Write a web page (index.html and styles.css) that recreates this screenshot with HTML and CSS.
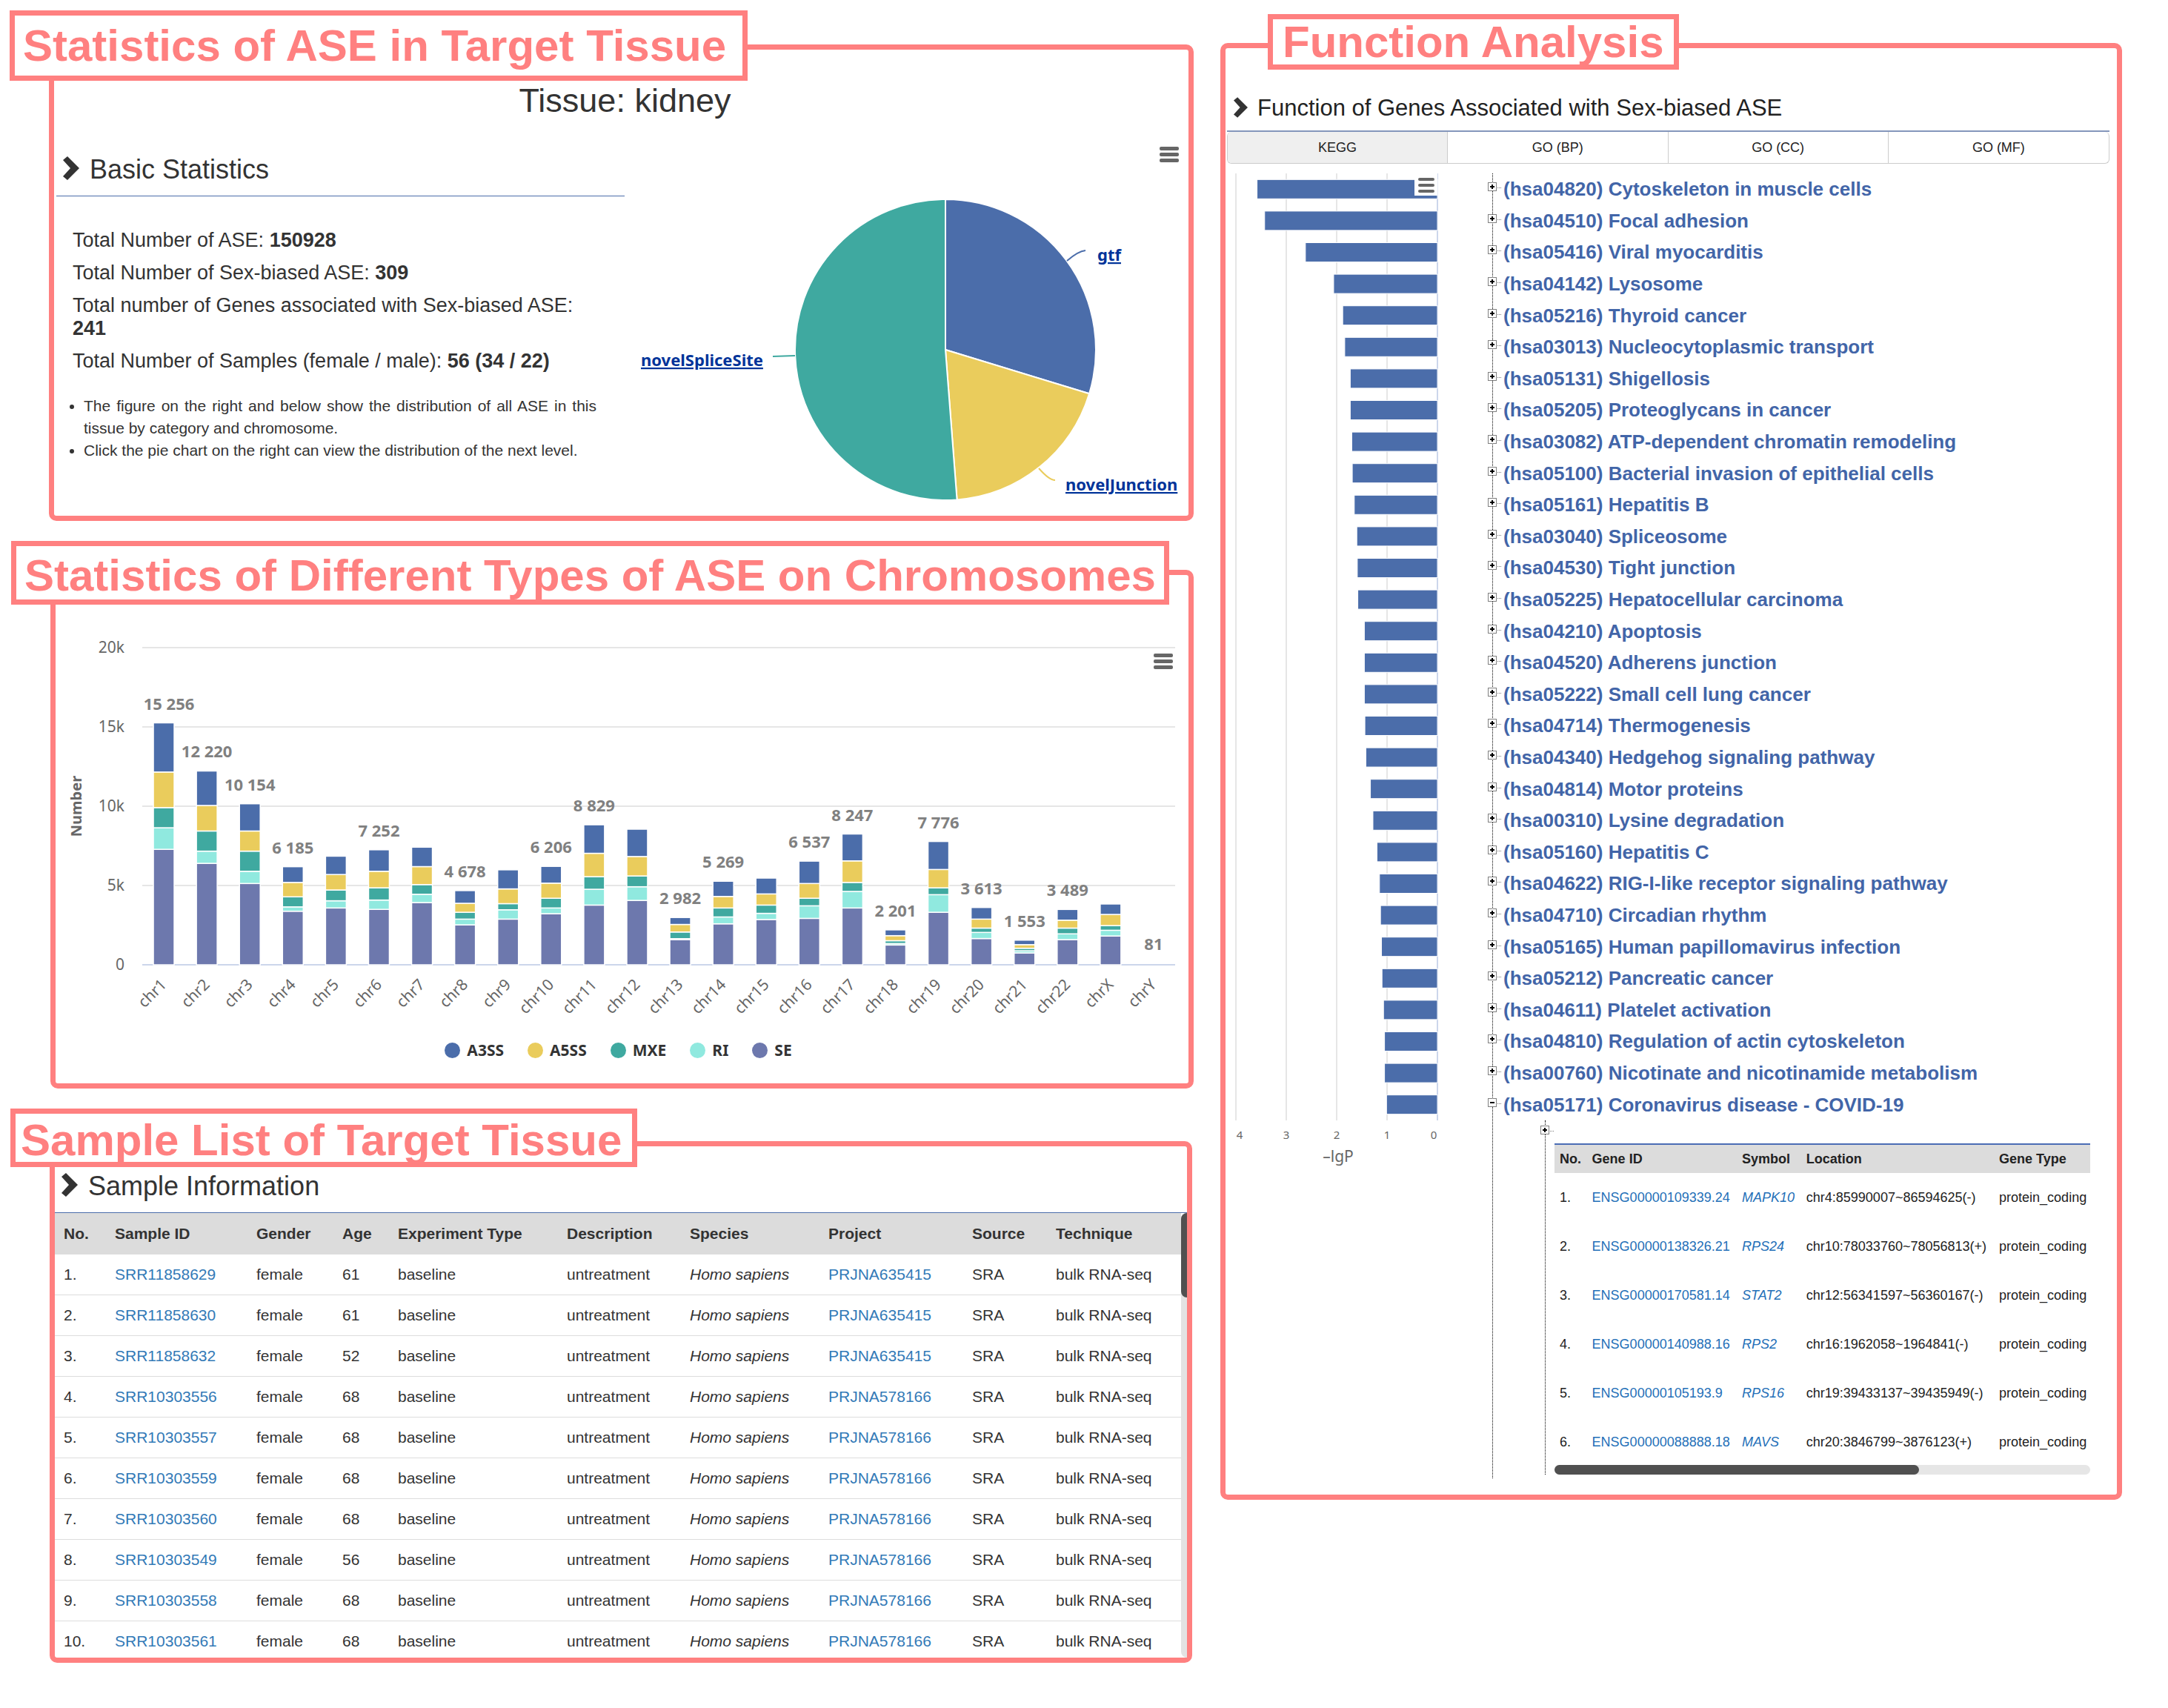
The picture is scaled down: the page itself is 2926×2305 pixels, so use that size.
FILE: index.html
```html
<!DOCTYPE html>
<html lang="en">
<head>
    <meta charset="utf-8">
    <title>Tissue: kidney</title>
    <link rel="stylesheet" href="styles.css">
</head>
<body>
    <div class="page">
        <div class="column column-left">
            <section class="panel">
                <h2 class="panel-title title-tissue">Statistics of ASE in Target Tissue</h2>
                <h1 class="tissue-name">Tissue: kidney</h1>
                <div class="overview">
                    <div class="overview-text">
                        <h3 class="section-heading">
                            <svg class="chevron" viewBox="0 0 22 32"><path d="M6 0L22 16L6 32L0 27L10 16L0 5Z"/></svg>
                            Basic Statistics
                        </h3>
                        <div class="totals">
                            <p>Total Number of ASE: <b>150928</b></p>
                            <p>Total Number of Sex-biased ASE: <b>309</b></p>
                            <p>Total number of Genes associated with Sex-biased ASE: <b>241</b></p>
                            <p>Total Number of Samples (female / male): <b>56 (34 / 22)</b></p>
                        </div>
                        <ul class="notes">
                            <li>The figure on the right and below show the distribution of all ASE in this tissue by category and chromosome.</li>
                            <li>Click the pie chart on the right can view the distribution of the next level.</li>
                        </ul>
                    </div>
                    <div class="chart pie-chart">
                        <svg viewBox="0 0 754 533">
                            <g stroke="#fff" stroke-width="2" stroke-linejoin="round">
                                <path fill="#4b6daa" d="M426 309L426 106A203 203 0 0 1 620.1 368.3Z"/>
                                <path fill="#eacc5c" d="M426 309L620.1 368.3A203 203 0 0 1 441.6 511.4Z"/>
                                <path fill="#3fa9a0" d="M426 309L441.6 511.4A203 203 0 1 1 426 106Z"/>
                            </g>
                            <g fill="none" stroke-width="2">
                                <path stroke="#4b6daa" d="M590 189Q605 176 615 175"/>
                                <path stroke="#eacc5c" d="M552 469Q566 485 574 485"/>
                                <path stroke="#3fa9a0" d="M193 318L223 317"/>
                            </g>
                            <a href="#gtf"><text class="pie-label" x="631" y="189">gtf</text></a>
                            <a href="#novelJunction"><text class="pie-label" x="588" y="499">novelJunction</text></a>
                            <a href="#novelSpliceSite"><text class="pie-label" x="15" y="331">novelSpliceSite</text></a>
                        </svg>
                        <button class="menu-button" aria-label="Chart menu"><span></span><span></span><span></span></button>
                    </div>
                </div>
            </section>

            <section class="panel panel-chromosomes">
                <h2 class="panel-title title-chromosomes">Statistics of Different Types of ASE on Chromosomes</h2>
                <div class="chart column-chart">
                    <svg id="chromosomeChart" viewBox="0 0 1529 579"></svg>
                    <button class="menu-button" aria-label="Chart menu"><span></span><span></span><span></span></button>
                </div>
                <ul class="legend">
                    <li class="a3ss">A3SS</li>
                    <li class="a5ss">A5SS</li>
                    <li class="mxe">MXE</li>
                    <li class="ri">RI</li>
                    <li class="se">SE</li>
                </ul>
            </section>

            <section class="panel panel-samples">
                <h2 class="panel-title title-samples">Sample List of Target Tissue</h2>
                <h3 class="section-heading samples-heading">
                    <svg class="chevron" viewBox="0 0 22 32"><path d="M6 0L22 16L6 32L0 27L10 16L0 5Z"/></svg>
                    Sample Information
                </h3>
                <div class="sample-view">
                    <table class="sample-table">
                        <colgroup>
                            <col class="s-no"><col class="s-id"><col class="s-gender"><col class="s-age"><col class="s-type">
                            <col class="s-desc"><col class="s-species"><col class="s-project"><col class="s-source"><col>
                        </colgroup>
                        <thead>
                            <tr><th>No.</th><th>Sample ID</th><th>Gender</th><th>Age</th><th>Experiment Type</th><th>Description</th><th>Species</th><th>Project</th><th>Source</th><th>Technique</th></tr>
                        </thead>
                        <tbody>
                            <tr><td>1.</td><td><a href="#SRR11858629">SRR11858629</a></td><td>female</td><td>61</td><td>baseline</td><td>untreatment</td><td><i>Homo sapiens</i></td><td><a href="#PRJNA635415">PRJNA635415</a></td><td>SRA</td><td>bulk RNA-seq</td></tr>
                            <tr><td>2.</td><td><a href="#SRR11858630">SRR11858630</a></td><td>female</td><td>61</td><td>baseline</td><td>untreatment</td><td><i>Homo sapiens</i></td><td><a href="#PRJNA635415">PRJNA635415</a></td><td>SRA</td><td>bulk RNA-seq</td></tr>
                            <tr><td>3.</td><td><a href="#SRR11858632">SRR11858632</a></td><td>female</td><td>52</td><td>baseline</td><td>untreatment</td><td><i>Homo sapiens</i></td><td><a href="#PRJNA635415">PRJNA635415</a></td><td>SRA</td><td>bulk RNA-seq</td></tr>
                            <tr><td>4.</td><td><a href="#SRR10303556">SRR10303556</a></td><td>female</td><td>68</td><td>baseline</td><td>untreatment</td><td><i>Homo sapiens</i></td><td><a href="#PRJNA578166">PRJNA578166</a></td><td>SRA</td><td>bulk RNA-seq</td></tr>
                            <tr><td>5.</td><td><a href="#SRR10303557">SRR10303557</a></td><td>female</td><td>68</td><td>baseline</td><td>untreatment</td><td><i>Homo sapiens</i></td><td><a href="#PRJNA578166">PRJNA578166</a></td><td>SRA</td><td>bulk RNA-seq</td></tr>
                            <tr><td>6.</td><td><a href="#SRR10303559">SRR10303559</a></td><td>female</td><td>68</td><td>baseline</td><td>untreatment</td><td><i>Homo sapiens</i></td><td><a href="#PRJNA578166">PRJNA578166</a></td><td>SRA</td><td>bulk RNA-seq</td></tr>
                            <tr><td>7.</td><td><a href="#SRR10303560">SRR10303560</a></td><td>female</td><td>68</td><td>baseline</td><td>untreatment</td><td><i>Homo sapiens</i></td><td><a href="#PRJNA578166">PRJNA578166</a></td><td>SRA</td><td>bulk RNA-seq</td></tr>
                            <tr><td>8.</td><td><a href="#SRR10303549">SRR10303549</a></td><td>female</td><td>56</td><td>baseline</td><td>untreatment</td><td><i>Homo sapiens</i></td><td><a href="#PRJNA578166">PRJNA578166</a></td><td>SRA</td><td>bulk RNA-seq</td></tr>
                            <tr><td>9.</td><td><a href="#SRR10303558">SRR10303558</a></td><td>female</td><td>68</td><td>baseline</td><td>untreatment</td><td><i>Homo sapiens</i></td><td><a href="#PRJNA578166">PRJNA578166</a></td><td>SRA</td><td>bulk RNA-seq</td></tr>
                            <tr><td>10.</td><td><a href="#SRR10303561">SRR10303561</a></td><td>female</td><td>68</td><td>baseline</td><td>untreatment</td><td><i>Homo sapiens</i></td><td><a href="#PRJNA578166">PRJNA578166</a></td><td>SRA</td><td>bulk RNA-seq</td></tr>
                        </tbody>
                    </table>
                    <div class="scroll-y"><div class="thumb"></div></div>
                </div>
            </section>
        </div>

        <div class="column">
            <section class="panel panel-function">
                <h2 class="panel-title title-function">Function Analysis</h2>
                <div class="function-body">
                    <h3 class="function-heading">
                        <svg class="chevron" viewBox="0 0 22 32"><path d="M6 0L22 16L6 32L0 27L10 16L0 5Z"/></svg>
                        Function of Genes Associated with Sex-biased ASE
                    </h3>
                    <div class="tabs">
                        <button class="tab active">KEGG</button>
                        <button class="tab">GO (BP)</button>
                        <button class="tab">GO (CC)</button>
                        <button class="tab">GO (MF)</button>
                    </div>
                    <div class="enrichment">
                        <div class="chart bar-chart">
                            <svg id="pathwayChart" viewBox="0 0 352 1350"></svg>
                            <button class="menu-button" aria-label="Chart menu"><span></span><span></span><span></span></button>
                        </div>
                        <div class="tree">
                            <ul class="tree-list">
                                <li><button class="toggle" aria-label="Expand"></button><a href="#hsa04820">(hsa04820) Cytoskeleton in muscle cells</a></li>
                                <li><button class="toggle" aria-label="Expand"></button><a href="#hsa04510">(hsa04510) Focal adhesion</a></li>
                                <li><button class="toggle" aria-label="Expand"></button><a href="#hsa05416">(hsa05416) Viral myocarditis</a></li>
                                <li><button class="toggle" aria-label="Expand"></button><a href="#hsa04142">(hsa04142) Lysosome</a></li>
                                <li><button class="toggle" aria-label="Expand"></button><a href="#hsa05216">(hsa05216) Thyroid cancer</a></li>
                                <li><button class="toggle" aria-label="Expand"></button><a href="#hsa03013">(hsa03013) Nucleocytoplasmic transport</a></li>
                                <li><button class="toggle" aria-label="Expand"></button><a href="#hsa05131">(hsa05131) Shigellosis</a></li>
                                <li><button class="toggle" aria-label="Expand"></button><a href="#hsa05205">(hsa05205) Proteoglycans in cancer</a></li>
                                <li><button class="toggle" aria-label="Expand"></button><a href="#hsa03082">(hsa03082) ATP-dependent chromatin remodeling</a></li>
                                <li><button class="toggle" aria-label="Expand"></button><a href="#hsa05100">(hsa05100) Bacterial invasion of epithelial cells</a></li>
                                <li><button class="toggle" aria-label="Expand"></button><a href="#hsa05161">(hsa05161) Hepatitis B</a></li>
                                <li><button class="toggle" aria-label="Expand"></button><a href="#hsa03040">(hsa03040) Spliceosome</a></li>
                                <li><button class="toggle" aria-label="Expand"></button><a href="#hsa04530">(hsa04530) Tight junction</a></li>
                                <li><button class="toggle" aria-label="Expand"></button><a href="#hsa05225">(hsa05225) Hepatocellular carcinoma</a></li>
                                <li><button class="toggle" aria-label="Expand"></button><a href="#hsa04210">(hsa04210) Apoptosis</a></li>
                                <li><button class="toggle" aria-label="Expand"></button><a href="#hsa04520">(hsa04520) Adherens junction</a></li>
                                <li><button class="toggle" aria-label="Expand"></button><a href="#hsa05222">(hsa05222) Small cell lung cancer</a></li>
                                <li><button class="toggle" aria-label="Expand"></button><a href="#hsa04714">(hsa04714) Thermogenesis</a></li>
                                <li><button class="toggle" aria-label="Expand"></button><a href="#hsa04340">(hsa04340) Hedgehog signaling pathway</a></li>
                                <li><button class="toggle" aria-label="Expand"></button><a href="#hsa04814">(hsa04814) Motor proteins</a></li>
                                <li><button class="toggle" aria-label="Expand"></button><a href="#hsa00310">(hsa00310) Lysine degradation</a></li>
                                <li><button class="toggle" aria-label="Expand"></button><a href="#hsa05160">(hsa05160) Hepatitis C</a></li>
                                <li><button class="toggle" aria-label="Expand"></button><a href="#hsa04622">(hsa04622) RIG-I-like receptor signaling pathway</a></li>
                                <li><button class="toggle" aria-label="Expand"></button><a href="#hsa04710">(hsa04710) Circadian rhythm</a></li>
                                <li><button class="toggle" aria-label="Expand"></button><a href="#hsa05165">(hsa05165) Human papillomavirus infection</a></li>
                                <li><button class="toggle" aria-label="Expand"></button><a href="#hsa05212">(hsa05212) Pancreatic cancer</a></li>
                                <li><button class="toggle" aria-label="Expand"></button><a href="#hsa04611">(hsa04611) Platelet activation</a></li>
                                <li><button class="toggle" aria-label="Expand"></button><a href="#hsa04810">(hsa04810) Regulation of actin cytoskeleton</a></li>
                                <li><button class="toggle" aria-label="Expand"></button><a href="#hsa00760">(hsa00760) Nicotinate and nicotinamide metabolism</a></li>
                                <li><button class="toggle open" aria-label="Collapse"></button><a href="#hsa05171">(hsa05171) Coronavirus disease - COVID-19</a></li>
                            </ul>
                            <div class="subtree">
                                <div class="subtree-node"><button class="toggle" aria-label="Expand"></button></div>
                                <div class="gene-view">
                                    <table class="gene-table">
                                        <colgroup><col class="g-no"><col class="g-id"><col class="g-symbol"><col class="g-location"><col class="g-type"></colgroup>
                                        <thead>
                                            <tr><th>No.</th><th>Gene ID</th><th>Symbol</th><th>Location</th><th>Gene Type</th></tr>
                                        </thead>
                                        <tbody>
                                            <tr><td>1.</td><td><a href="#ENSG00000109339">ENSG00000109339.24</a></td><td><a href="#MAPK10"><i>MAPK10</i></a></td><td>chr4:85990007~86594625(-)</td><td>protein_coding</td></tr>
                                            <tr><td>2.</td><td><a href="#ENSG00000138326">ENSG00000138326.21</a></td><td><a href="#RPS24"><i>RPS24</i></a></td><td>chr10:78033760~78056813(+)</td><td>protein_coding</td></tr>
                                            <tr><td>3.</td><td><a href="#ENSG00000170581">ENSG00000170581.14</a></td><td><a href="#STAT2"><i>STAT2</i></a></td><td>chr12:56341597~56360167(-)</td><td>protein_coding</td></tr>
                                            <tr><td>4.</td><td><a href="#ENSG00000140988">ENSG00000140988.16</a></td><td><a href="#RPS2"><i>RPS2</i></a></td><td>chr16:1962058~1964841(-)</td><td>protein_coding</td></tr>
                                            <tr><td>5.</td><td><a href="#ENSG00000105193">ENSG00000105193.9</a></td><td><a href="#RPS16"><i>RPS16</i></a></td><td>chr19:39433137~39435949(-)</td><td>protein_coding</td></tr>
                                            <tr><td>6.</td><td><a href="#ENSG00000088888">ENSG00000088888.18</a></td><td><a href="#MAVS"><i>MAVS</i></a></td><td>chr20:3846799~3876123(+)</td><td>protein_coding</td></tr>
                                        </tbody>
                                    </table>
                                </div>
                                <div class="scroll-x"><div class="thumb"></div></div>
                            </div>
                        </div>
                    </div>
                </div>
            </section>
        </div>
    </div>
    <script src="script.js"></script>
</body>
</html>
```
FILE: styles.css
```css
* {
    box-sizing: border-box;
}
body {
    margin: 0;
    background: #fff;
    color: #333;
    font-family: "Liberation Sans", Arial, sans-serif;
}
h1, h2, h3, p, ul {
    margin: 0;
    padding: 0;
    font-weight: normal;
}
ul {
    list-style: none;
}
a {
    color: #337ab7;
    text-decoration: none;
}
button {
    padding: 0;
    border: none;
    background: none;
    font-family: inherit;
    color: inherit;
    cursor: pointer;
}
svg {
    display: block;
}

/* page frame */
.page {
    display: grid;
    grid-template-columns: 1545fr 1217fr;
    align-items: start;
    gap: 36px;
    padding: 58px 62px 60px 66px;
}
.column-left {
    padding-top: 2px;
}
.panel {
    border: 7px solid #ff8080;
    border-radius: 10px;
}
.panel-chromosomes {
    margin: 66px 0 0 2px;
    padding-bottom: 30px;
}
.panel-samples {
    margin: 71px 2px 0 1px;
}
.panel-title {
    width: fit-content;
    border: 7px solid #ff8080;
    background: #fff;
    color: #ff8080;
    font-size: 60px;
    font-weight: bold;
    white-space: nowrap;
}
.title-tissue {
    margin: -53px 0 0 -60px;
    padding: 0 22px 0 11px;
    line-height: 81px;
}
.title-chromosomes {
    margin: -46px 0 0 -60px;
    padding: 8px 11px 0;
    line-height: 64px;
}
.title-samples {
    margin: -51px 0 0 -60px;
    padding: 6px 14px 0 7px;
    line-height: 59px;
}
.title-function {
    margin: -46px 0 0 57px;
    padding: 0 13px;
    line-height: 61px;
}

/* section headings */
.section-heading, .function-heading {
    display: flex;
    align-items: flex-start;
    padding-left: 9px;
}
.section-heading {
    gap: 14px;
    padding-bottom: 14px;
    border-bottom: 1px solid #4b6daa;
    font-size: 36px;
    line-height: 42px;
}
.function-heading {
    gap: 13px;
    padding-bottom: 12px;
    border-bottom: 2px solid #8496bb;
    font-size: 31px;
    line-height: 36px;
    color: #222;
}
.chevron {
    width: 22px;
    height: 32px;
    margin-top: 3px;
    fill: #333;
}
.function-heading .chevron {
    width: 19px;
    height: 28px;
}
.samples-heading {
    margin-top: 5px;
}

/* tissue overview */
.tissue-name {
    padding-left: 10px;
    font-size: 45px;
    line-height: 54px;
    text-align: center;
}
.overview {
    display: grid;
    grid-template-columns: 767fr 754fr;
    gap: 7px;
    margin-left: 3px;
}
.overview-text {
    padding-top: 45px;
}
.totals {
    display: flex;
    flex-direction: column;
    gap: 13px;
    margin-top: 44px;
    padding: 0 40px 0 22px;
    font-size: 27px;
    line-height: 31px;
}
.notes {
    margin-top: 30px;
    padding: 0 38px 0 37px;
    list-style: disc;
    font-size: 21px;
    line-height: 30px;
    text-align: justify;
}

/* charts */
.chart {
    position: relative;
}
.chart svg {
    width: 100%;
}
.chart text {
    font-family: "Noto Sans", sans-serif;
    font-size: 21px;
    fill: #666;
}
.chart .pie-label {
    font-size: 22px;
    font-weight: bold;
    fill: #003399;
    text-decoration: underline;
}
.chart .total {
    font-size: 22px;
    font-weight: bold;
    fill: #808080;
}
.chart .axis-title {
    font-size: 20px;
    font-weight: bold;
}
.chart .tick {
    font-size: 15px;
}
.menu-button {
    position: absolute;
    display: flex;
    flex-direction: column;
    gap: 3px;
}
.menu-button span {
    width: 26px;
    height: 5px;
    border-radius: 2px;
    background: #666;
}
.pie-chart .menu-button {
    top: 35px;
    right: 13px;
}
.column-chart .menu-button {
    top: 66px;
    right: 21px;
}
.bar-chart .menu-button {
    top: 0;
    left: 253px;
    gap: 4px;
    padding: 6px 4px 4px 5px;
    background: #fff;
}
.bar-chart .menu-button span {
    width: 22px;
    height: 4px;
}
.legend {
    display: flex;
    justify-content: center;
    gap: 32px;
    margin-top: 7px;
    padding-right: 10px;
    font-family: "Noto Sans", sans-serif;
    font-size: 21px;
    font-weight: bold;
    line-height: 30px;
}
.legend li {
    display: flex;
    align-items: center;
    gap: 9px;
}
.legend li::before {
    content: "";
    width: 21px;
    height: 21px;
    border-radius: 50%;
    background: currentColor;
}
.legend .a3ss::before {
    background: #4b6daa;
}
.legend .a5ss::before {
    background: #eacc5c;
}
.legend .mxe::before {
    background: #3fa9a0;
}
.legend .ri::before {
    background: #90e9df;
}
.legend .se::before {
    background: #6d78ad;
}

/* sample table */
.sample-view {
    display: flex;
    height: 600px;
    overflow: hidden;
}
table {
    width: 100%;
    table-layout: fixed;
    border-collapse: separate;
    border-spacing: 0;
}
th {
    background: #dcdcdc;
    text-align: left;
}
th, td {
    white-space: nowrap;
}
.sample-table {
    font-size: 21px;
}
.sample-table th, .sample-table td {
    height: 55px;
    padding: 0 0 0 12px;
    border-bottom: 1px solid #ddd;
}
.sample-table th {
    height: 56px;
}
.s-no { width: 69px; }
.s-id { width: 191px; }
.s-gender { width: 116px; }
.s-age { width: 75px; }
.s-type { width: 228px; }
.s-desc { width: 166px; }
.s-species { width: 187px; }
.s-project { width: 194px; }
.s-source { width: 113px; }
.scroll-y {
    flex: none;
    width: 8px;
    border-radius: 8px 0 0 8px;
    background: #e3e3e3;
}
.scroll-y .thumb {
    height: 114px;
    border-radius: 8px 0 0 8px;
    background: #505050;
}

/* function analysis */
.panel-function {
    padding-bottom: 22px;
}
.function-body {
    padding: 34px 10px 0 2px;
}
.tabs {
    display: grid;
    grid-template-columns: repeat(4, 1fr);
    height: 43px;
    border: 1px solid #ccc;
    border-top: none;
    border-radius: 6px;
    overflow: hidden;
}
.tab {
    border-right: 1px solid #ccc;
    font-size: 18px;
    color: #222;
}
.tab:last-child {
    border-right: none;
}
.tab.active {
    background: #efefef;
}
.enrichment {
    display: grid;
    grid-template-columns: 352px 1fr;
    align-items: start;
    margin-top: 13px;
}
.tree {
    margin-left: 6px;
    padding-bottom: 5px;
    border-left: 1px dotted #000;
}
.tree-list {
    display: grid;
    grid-auto-rows: 1fr;
    height: 1278px;
}
.tree-list li {
    display: flex;
    align-items: center;
}
.tree-list a {
    color: #4265a8;
    font-size: 26px;
    font-weight: bold;
    line-height: 30px;
    white-space: nowrap;
}
.toggle {
    position: relative;
    flex: none;
    width: 12px;
    height: 12px;
    margin: 0 9px 6px -7px;
    border: 1px solid #808080;
    background: linear-gradient(#000, #000) center / 6px 2px no-repeat, linear-gradient(#000, #000) center / 2px 6px no-repeat, #fff;
}
.toggle.open {
    background: linear-gradient(#000, #000) center / 6px 2px no-repeat, #fff;
}
.toggle::after {
    content: "";
    position: absolute;
    top: 6px;
    left: 12px;
    width: 5px;
    border-top: 1px dotted #777;
}
.subtree {
    margin: 0 26px 0 70px;
    border-left: 1px dotted #000;
}
.subtree-node {
    display: flex;
    align-items: center;
    height: 31px;
}
.gene-view {
    height: 434px;
    margin-left: 12px;
    border-top: 2px solid #4b6db5;
    overflow: hidden;
}
.gene-table {
    color: #222;
    font-size: 18px;
}
.gene-table th {
    height: 38px;
    padding: 0;
}
.gene-table td {
    height: 66px;
    padding: 0;
}
.gene-table th:first-child, .gene-table td:first-child {
    padding-left: 7px;
}
.gene-table a {
    color: #2470b8;
}
.g-no { width: 7%; }
.g-id { width: 28%; }
.g-symbol { width: 12%; }
.g-location { width: 36%; }
.g-type { width: 17%; }
.scroll-x {
    height: 13px;
    margin-left: 12px;
    border-radius: 7px;
    background: #e6e6e6;
}
.scroll-x .thumb {
    width: 68%;
    height: 13px;
    border-radius: 7px;
    background: #505050;
}
```
FILE: script.js
```javascript
const SVG = "http://www.w3.org/2000/svg";

function draw(parent, name, attrs, text) {
    const el = document.createElementNS(SVG, name);
    for (const key in attrs) {
        el.setAttribute(key, attrs[key]);
    }
    if (text !== undefined) {
        el.textContent = text;
    }
    parent.appendChild(el);
    return el;
}

// counts per chromosome: SE, RI, MXE, A5SS, A3SS
const colors = ["#6d78ad", "#90e9df", "#3fa9a0", "#eacc5c", "#4b6daa"];
const chromosomes = [
    ["chr1", [7280, 1361, 1270, 2245, 3100], "15 256"],
    ["chr2", [6396, 771, 1270, 1610, 2173], "12 220"],
    ["chr3", [5126, 771, 1270, 1270, 1717], "10 154"],
    ["chr4", [3379, 272, 635, 907, 992], "6 185"],
    ["chr5", [3583, 454, 680, 975, 1157]],
    ["chr6", [3493, 590, 771, 1043, 1355], "7 252"],
    ["chr7", [3924, 522, 612, 1134, 1224]],
    ["chr8", [2517, 363, 431, 567, 800], "4 678"],
    ["chr9", [2880, 590, 386, 930, 1202]],
    ["chr10", [3220, 363, 612, 953, 1058], "6 206"],
    ["chr11", [3765, 998, 794, 1474, 1798], "8 829"],
    ["chr12", [4060, 862, 680, 1225, 1724]],
    ["chr13", [1588, 60, 420, 476, 438], "2 982"],
    ["chr14", [2585, 431, 567, 726, 960], "5 269"],
    ["chr15", [2858, 386, 522, 703, 998]],
    ["chr16", [2926, 794, 476, 930, 1411], "6 537"],
    ["chr17", [3583, 1043, 567, 1361, 1693], "8 247"],
    ["chr18", [1247, 91, 181, 318, 364], "2 201"],
    ["chr19", [3311, 1111, 431, 1157, 1766], "7 776"],
    ["chr20", [1656, 386, 272, 567, 732], "3 613"],
    ["chr21", [748, 136, 159, 227, 283], "1 553"],
    ["chr22", [1588, 363, 363, 499, 676], "3 489"],
    ["chrX", [1814, 363, 295, 703, 658]],
    ["chrY", [17, 16, 16, 16, 16], "81"]
];

function drawChromosomes() {
    const svg = document.getElementById("chromosomeChart");
    const left = 117, right = 1511, bottom = 486, perK = 21.4;
    const step = (right - left) / chromosomes.length;

    ["0", "5k", "10k", "15k", "20k"].forEach((label, i) => {
        const y = Math.round(bottom - i * 5 * perK);
        draw(svg, "line", { x1: left, x2: right, y1: y, y2: y, stroke: i ? "#e6e6e6" : "#ccd6eb", "stroke-width": 2 });
        draw(svg, "text", { x: 93, y: y + 7, "text-anchor": "end" }, label);
    });
    draw(svg, "text", { class: "axis-title", transform: "translate(35 272) rotate(-90)", "text-anchor": "middle" }, "Number");

    chromosomes.forEach(([name, counts, total], i) => {
        const x = left + step * (i + 0.5);
        let y = bottom;
        counts.forEach((count, n) => {
            const h = count / 1000 * perK;
            y -= h;
            if (h > 1) {
                draw(svg, "rect", { x: x - 14, y: y, width: 28, height: h, fill: colors[n], stroke: "#fff", "stroke-width": 1.5 });
            }
        });
        if (total) {
            draw(svg, "text", { class: "total", x: Math.max(x, left + 36), y: y - 18, "text-anchor": "middle" }, total);
        }
        draw(svg, "text", { transform: `translate(${x + 5} 514) rotate(-45)`, "text-anchor": "end" }, name);
    });
}

// -lgP for each pathway, in tree order
const pathways = [3.58, 3.43, 2.62, 2.06, 1.88, 1.84, 1.73, 1.73, 1.70, 1.69, 1.65, 1.60, 1.59, 1.58, 1.45,
    1.45, 1.45, 1.44, 1.42, 1.33, 1.28, 1.20, 1.15, 1.13, 1.11, 1.10, 1.07, 1.05, 1.05, 1.01];

function drawPathways() {
    const svg = document.getElementById("pathwayChart");
    const zero = 284, unit = 68, height = 1278;
    const step = height / pathways.length;

    for (let i = 0; i <= 4; i++) {
        const x = zero - i * unit;
        draw(svg, "line", { x1: x, x2: x, y1: 0, y2: height, stroke: i ? "#e6e6e6" : "#ccd6eb", "stroke-width": 2 });
        // the outer labels are kept inside the plot
        const shift = i === 0 ? -5 : i === 4 ? 5 : 0;
        draw(svg, "text", { class: "tick", x: x + shift, y: 1303, "text-anchor": "middle" }, i);
    }
    pathways.forEach((value, i) => {
        const w = value * unit;
        draw(svg, "rect", { x: zero - w, y: step * (i + 0.5) - 13, width: w, height: 26, fill: "#4b6daa", stroke: "#fff", "stroke-width": 1 });
    });
    draw(svg, "text", { x: 150, y: 1334, "text-anchor": "middle" }, "–lgP");
}

drawChromosomes();
drawPathways();
```
